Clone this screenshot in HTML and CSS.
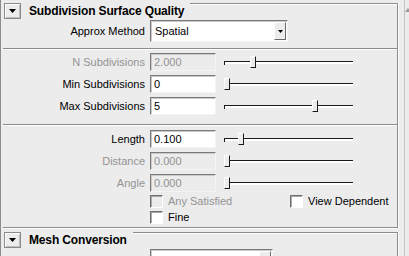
FILE: index.html
```html
<!DOCTYPE html>
<html lang="en">
<head>
  <meta charset="UTF-8">
  <title>Subdivision Surface Quality</title>
  <link rel="stylesheet" href="styles.css">
</head>
<body>
  <div class="panel">
    <div class="content">

      <section class="frame">
        <div class="frame-head">
          <button class="fold"><svg width="7" height="4" viewBox="0 0 7 4"><polygon points="0,0 7,0 3.5,4"/></svg></button>
          <span class="frame-title">Subdivision Surface Quality</span>
        </div>
        <div class="frame-body">
          <div class="group group-a">
            <div class="row row-tall">
              <span class="label">Approx Method</span>
              <div class="combo">
                <span class="combo-text">Spatial</span>
                <span class="combo-btn"><svg width="5" height="3" viewBox="0 0 5 3"><polygon points="0,0 5,0 2.5,3"/></svg></span>
              </div>
            </div>
          </div>

          <div class="group group-b">
            <div class="row">
              <span class="label off">N Subdivisions</span>
              <input class="field" type="text" value="2.000" disabled>
              <div class="slider"><div class="track"></div><div class="thumb" style="left: 26px"></div></div>
            </div>
            <div class="row">
              <span class="label">Min Subdivisions</span>
              <input class="field" type="text" value="0">
              <div class="slider"><div class="track"></div><div class="thumb" style="left: 0px"></div></div>
            </div>
            <div class="row">
              <span class="label">Max Subdivisions</span>
              <input class="field" type="text" value="5">
              <div class="slider"><div class="track"></div><div class="thumb" style="left: 88px"></div></div>
            </div>
          </div>

          <div class="group group-c">
            <div class="row">
              <span class="label">Length</span>
              <input class="field" type="text" value="0.100">
              <div class="slider"><div class="track"></div><div class="thumb" style="left: 14px"></div></div>
            </div>
            <div class="row">
              <span class="label off">Distance</span>
              <input class="field" type="text" value="0.000" disabled>
              <div class="slider"><div class="track"></div><div class="thumb" style="left: 0px"></div></div>
            </div>
            <div class="row">
              <span class="label off">Angle</span>
              <input class="field" type="text" value="0.000" disabled>
              <div class="slider"><div class="track"></div><div class="thumb" style="left: 0px"></div></div>
            </div>
            <div class="checks">
              <div class="check-row">
                <label class="check off"><input type="checkbox" disabled> Any Satisfied</label>
                <label class="check"><input type="checkbox"> View Dependent</label>
              </div>
              <div class="check-row">
                <label class="check"><input type="checkbox"> Fine</label>
              </div>
            </div>
          </div>
        </div>
      </section>

      <section class="frame">
        <div class="frame-head">
          <button class="fold"><svg width="7" height="4" viewBox="0 0 7 4"><polygon points="0,0 7,0 3.5,4"/></svg></button>
          <span class="frame-title">Mesh Conversion</span>
        </div>
        <div class="frame-body">
          <div class="group">
            <div class="row row-tall">
              <span class="label">Conversion</span>
              <div class="combo combo-short">
                <span class="combo-text">Uniform</span>
                <span class="combo-btn"><svg width="5" height="3" viewBox="0 0 5 3"><polygon points="0,0 5,0 2.5,3"/></svg></span>
              </div>
            </div>
          </div>
        </div>
      </section>

    </div>
    <div class="scroll"><span class="scroll-arrow"></span></div>
  </div>
</body>
</html>
```

FILE: styles.css
```css
body {
  margin: 0;
  width: 409px;
  height: 256px;
  overflow: hidden;
  background: #ececec;
  font-family: 'Liberation Sans', Arial, sans-serif;
  font-size: 11px;
  color: #000;
}

.panel {
  display: flex;
  height: 256px;
  padding-left: 2px;
  border-left: 1px solid #8c8c8c;
}

.content {
  width: 395px;
  flex: none;
}

/* collapsible frames */
.frame + .frame {
  margin-top: 1px;
}

.frame-head {
  display: flex;
  align-items: flex-start;
  height: 20px;
}

.frame-head::after {
  content: "";
  flex: 1;
  height: 17px;
  margin: 3px 0 0 6px;
  box-sizing: border-box;
  border-top: 1px solid #8c8c8c;
  border-right: 1px solid #8c8c8c;
  box-shadow: inset 0 1px 0 #fff, 1px 0 0 #fff;
}

.fold {
  width: 17px;
  height: 16px;
  margin: 3px 0 0 1px;
  padding: 0;
  border: 1px solid #8a8a8a;
  background: #ececec;
  box-shadow: inset 1px 1px 0 #fff, inset -1px -1px 0 #bdbdbd;
  display: flex;
  align-items: center;
  justify-content: center;
}

.fold svg,
.combo-btn svg {
  fill: #000;
  display: block;
}

.frame-title {
  margin-left: 8px;
  padding-top: 2px;
  line-height: 18px;
  font-size: 12px;
  font-weight: bold;
  letter-spacing: -0.15px;
}

.frame-body {
  border-right: 1px solid #8c8c8c;
  box-shadow: 1px 0 0 #fff;
}

/* groups separated by etched lines */
.group {
  display: flex;
  flex-direction: column;
  border-bottom: 1px solid #8c8c8c;
  box-shadow: 0 1px 0 #fff;
}

.group + .group {
  margin-top: 1px;
}

.group-a {
  padding-bottom: 6px;
}

.group-b {
  padding: 3px 0 9px;
}

.group-c {
  padding: 4px 0 2px;
}

.row {
  display: flex;
  align-items: center;
  height: 18px;
}

.row + .row {
  margin-top: 4px;
}

.row-tall {
  height: 22px;
}

.label {
  width: 142px;
  margin-right: 5px;
  text-align: right;
  white-space: nowrap;
}

.off {
  color: #939393;
}

.field {
  width: 66px;
  height: 18px;
  box-sizing: border-box;
  margin: 0;
  padding: 0 0 0 3px;
  border: 1px solid;
  border-color: #7a7a7a #f4f4f4 #f4f4f4 #7a7a7a;
  box-shadow: inset 1px 1px 0 #c9c9c9;
  background: #fff;
  font: 11px 'Liberation Sans', Arial, sans-serif;
  color: #000;
  outline: none;
}

.field:disabled {
  background: #ececec;
  color: #939393;
}

.combo {
  display: flex;
  align-items: center;
  width: 138px;
  height: 22px;
  box-sizing: border-box;
  border: 1px solid;
  border-color: #7a7a7a #f4f4f4 #f4f4f4 #7a7a7a;
  box-shadow: inset 1px 1px 0 #c9c9c9;
  background: #fff;
}

.combo-short {
  width: 123px;
}

.combo-text {
  padding-left: 4px;
}

.combo-btn {
  margin-left: auto;
  margin-right: 1px;
  width: 12px;
  height: 18px;
  box-sizing: border-box;
  border: 1px solid;
  border-color: #fff #6a6a6a #6a6a6a #fff;
  background: #ececec;
  display: flex;
  align-items: center;
  justify-content: center;
}

/* sliders */
.slider {
  position: relative;
  width: 129px;
  height: 12px;
  margin-left: 8px;
}

.track {
  margin-top: 5px;
  height: 4px;
  box-sizing: border-box;
  border-top: 1px solid #1a1a1a;
  border-left: 1px solid #1a1a1a;
  background: linear-gradient(#fff 0 2px, transparent 2px);
}

.thumb {
  position: absolute;
  top: 0;
  width: 6px;
  height: 12px;
  box-sizing: border-box;
  border: 1px solid;
  border-color: #fff #1a1a1a #1a1a1a #fff;
  background: #ececec;
}

/* checkboxes */
.checks {
  margin-top: 1px;
}

.check-row {
  display: flex;
  align-items: center;
  height: 16px;
  padding-left: 147px;
}

.check {
  flex: none;
  display: flex;
  align-items: center;
  width: 140px;
  white-space: nowrap;
}

.check:last-child {
  width: auto;
}

.check input {
  appearance: none;
  width: 13px;
  height: 13px;
  margin: 0 5px 0 0;
  box-sizing: border-box;
  border: 1px solid;
  border-color: #6e6e6e #fff #fff #6e6e6e;
  box-shadow: inset 1px 1px 0 #a8a8a8;
  background: #fff;
}

.check input:disabled {
  background: #ececec;
}

/* edge of the scroll bar */
.scroll {
  flex: 1;
  margin-left: 6px;
  border-left: 1px solid #c4c4c4;
  overflow: hidden;
}

.scroll-arrow {
  display: block;
  width: 0;
  height: 0;
  margin-top: 8px;
  border-left: 3px solid transparent;
  border-right: 3px solid transparent;
  border-bottom: 4px solid #9a9a9a;
}
```
